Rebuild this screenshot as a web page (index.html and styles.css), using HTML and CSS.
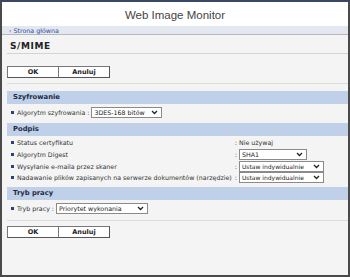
FILE: index.html
```html
<!DOCTYPE html>
<html lang="pl">
<head>
<meta charset="utf-8">
<link rel="stylesheet" href="styles.css">
</head>
<body>
<div class="frame">
  <header class="top">Web Image Monitor</header>
  <nav class="crumb"><a href="#">‹ Strona główna</a></nav>
  <main class="content">
    <h1 class="title">S/MIME</h1>
    <div class="buttons"><button class="btn">OK</button><button class="btn">Anuluj</button></div>
    <hr class="sep">
    <section class="sec">
      <h2 class="sec-h">Szyfrowanie</h2>
      <div class="row inline"><span class="bullet"></span><span>Algorytm szyfrowania :</span>
        <select class="sel s-alg"><option>3DES-168 bitów</option></select></div>
    </section>
    <section class="sec">
      <h2 class="sec-h">Podpis</h2>
      <div class="grid">
        <div class="lbl"><span class="bullet"></span>Status certyfikatu</div>
        <div class="val">: Nie używaj</div>
        <div class="lbl"><span class="bullet"></span>Algorytm Digest</div>
        <div class="val">: <select class="sel s-sha"><option>SHA1</option></select></div>
        <div class="lbl"><span class="bullet"></span>Wysyłanie e-maila przez skaner</div>
        <div class="val">: <select class="sel s-ind"><option>Ustaw indywidualnie</option></select></div>
        <div class="lbl"><span class="bullet"></span>Nadawanie plików zapisanych na serwerze dokumentów (narzędzie)</div>
        <div class="val">: <select class="sel s-ind"><option>Ustaw indywidualnie</option></select></div>
      </div>
    </section>
    <section class="sec">
      <h2 class="sec-h">Tryb pracy</h2>
      <div class="row inline"><span class="bullet"></span><span>Tryb pracy :</span>
        <select class="sel s-tryb"><option>Priorytet wykonania</option></select></div>
    </section>
    <hr class="sep sep2">
    <div class="buttons"><button class="btn">OK</button><button class="btn">Anuluj</button></div>
  </main>
</div>
</body>
</html>
```
FILE: styles.css
```css
html, body { margin: 0; padding: 0; }
body {
  width: 350px;
  height: 277px;
  overflow: hidden;
  font-family: "DejaVu Sans", Verdana, sans-serif;
  color: #222;
}
.frame {
  box-sizing: border-box;
  width: 350px;
  height: 277px;
  border: 2px solid #4a4a4a;
  border-top: 2px solid #3b4766;
  background: #f4f4f4;
  display: flex;
  flex-direction: column;
}
.top {
  background: #fff;
  height: 23px;
  display: flex;
  align-items: center;
  justify-content: center;
  font-family: "Liberation Sans", Arial, sans-serif;
  font-size: 11.5px;
  color: #444;
  padding-top: 1px;
}
.crumb {
  height: 8px;
  background: #e3e7ef;
  border-bottom: 1px solid #b8b8b8;
  display: flex;
  align-items: center;
  padding-left: 7px;
}
.crumb a {
  font-size: 6.3px;
  color: #2f4ea0;
  text-decoration: none;
}
.content {
  padding-left: 5px;
  flex: 1;
}
.title {
  margin: 0;
  font-size: 9px;
  font-weight: bold;
  letter-spacing: 0.6px;
  padding: 6px 0 0 3px;
  height: 12px;
  border-bottom: 1px solid #d4d4d4;
  color: #222;
}
.buttons {
  display: flex;
  margin-top: 12px;
}
.btn {
  box-sizing: border-box;
  width: 52px;
  height: 12px;
  margin: 0;
  padding: 0;
  background: #fff;
  border: 1px solid #777;
  border-right-color: #555;
  border-bottom-color: #555;
  font-family: "DejaVu Sans", Verdana, sans-serif;
  font-size: 6.5px;
  font-weight: bold;
  color: #222;
  line-height: 10px;
}
.btn + .btn { margin-left: -1px; }
.sep {
  border: 0;
  border-top: 1px solid #dcdcdc;
  margin: 5px 0 0 0;
  height: 0;
}
.sec { margin-top: 7px; }
.sec + .sec { margin-top: 2px; }
.sec-h {
  margin: 0;
  background: #bfd0e8;
  height: 13px;
  line-height: 13px;
  font-size: 6.8px;
  font-weight: bold;
  color: #1d2a44;
  padding-left: 6px;
}
.row {
  font-size: 6.3px;
  color: #333;
  display: flex;
  align-items: center;
  padding: 3px 0 3px 4px;
  height: 11px;
}
.row .sel { margin-left: 2px; }
.bullet {
  display: inline-block;
  width: 3px;
  height: 3px;
  background: #2d3f7a;
  margin-right: 3px;
  vertical-align: middle;
  position: relative;
  top: -1px;
}
.row .bullet { top: 0; }
.grid {
  display: grid;
  grid-template-columns: max-content auto;
  column-gap: 3px;
  grid-auto-rows: 11.7px;
  align-items: center;
  padding: 1px 0 1px 4px;
  font-size: 6.3px;
  color: #333;
}
.grid .lbl { white-space: nowrap; }
.grid .val { white-space: nowrap; display: flex; align-items: center; }
.grid .val .sel { margin-left: 2px; }
.sel {
  box-sizing: border-box;
  height: 11px;
  font-family: "DejaVu Sans", Verdana, sans-serif;
  font-size: 6.3px;
  color: #222;
  background: #fff;
  border: 1px solid #8a8a8a;
  border-radius: 0;
  padding: 0 0 0 2px;
  -webkit-appearance: none;
  appearance: none;
  background-image: url("data:image/svg+xml,%3Csvg xmlns='http://www.w3.org/2000/svg' width='7' height='5'%3E%3Cpath d='M1 1l2.5 2.5L6 1' fill='none' stroke='%23222' stroke-width='1.3'/%3E%3C/svg%3E");
  background-repeat: no-repeat;
  background-position: right 3px center;
}
.s-alg { width: 71px; }
.s-sha { width: 68px; }
.s-ind { width: 85px; font-size: 6px; }
.s-tryb { width: 92px; }
.sep2 { margin-top: 3px; }
.buttons:last-child { margin-top: 5px; }
```
